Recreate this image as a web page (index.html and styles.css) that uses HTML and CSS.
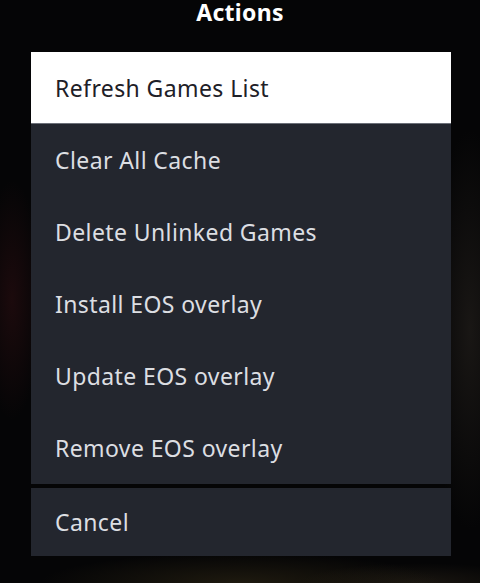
FILE: index.html
```html
<!DOCTYPE html>
<html>
<head>
<meta charset="utf-8">
<link rel="stylesheet" href="styles.css">
</head>
<body>
<div class="screen">
  <div class="title">Actions</div>
  <div class="menu">
    <div class="group">
      <div class="item focused">Refresh Games List</div>
      <div class="item">Clear All Cache</div>
      <div class="item">Delete Unlinked Games</div>
      <div class="item">Install EOS overlay</div>
      <div class="item">Update EOS overlay</div>
      <div class="item">Remove EOS overlay</div>
    </div>
    <div class="group">
      <div class="item cancel">Cancel</div>
    </div>
  </div>
</div>
</body>
</html>
```
FILE: styles.css
```css
html, body {
  margin: 0;
  padding: 0;
  width: 480px;
  height: 583px;
  overflow: hidden;
  background: #050506;
}
.screen {
  width: 480px;
  height: 583px;
  display: flex;
  flex-direction: column;
  align-items: center;
  font-family: "Noto Sans", "Open Sans", sans-serif;
  background:
    radial-gradient(ellipse 30px 120px at 12px 300px, rgba(70, 20, 25, 0.35), transparent),
    radial-gradient(ellipse 40px 200px at 470px 330px, rgba(45, 40, 35, 0.5), transparent),
    radial-gradient(ellipse 200px 30px at 240px 583px, rgba(60, 50, 25, 0.45), transparent),
    radial-gradient(ellipse 120px 20px at 420px 583px, rgba(55, 45, 30, 0.4), transparent),
    #050506;
}
.title {
  height: 24px;
  font-weight: 700;
  font-size: 23px;
  color: #ffffff;
  line-height: 24px;
  width: 100%;
  text-align: center;
  letter-spacing: 0.3px;
}
.menu {
  width: 420px;
  margin-top: 28px;
  margin-left: 2px;
  display: flex;
  flex-direction: column;
  gap: 4px;
}
.group {
  display: flex;
  flex-direction: column;
}
.item {
  height: 72px;
  box-sizing: border-box;
  padding-left: 24px;
  display: flex;
  align-items: center;
  background: #23262e;
  color: #dcdee2;
  font-size: 23px;
  letter-spacing: 0.4px;
}
.item.focused {
  background: #ffffff;
  color: #1e2027;
  border-bottom: 1px solid #6b6f78;
}
.item.cancel {
  height: 68px;
}
```
